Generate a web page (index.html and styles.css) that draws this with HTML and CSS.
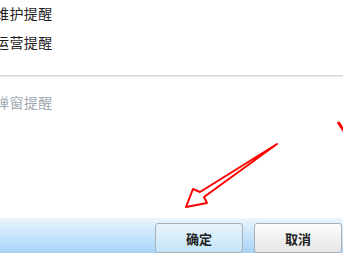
FILE: index.html
```html
<!DOCTYPE html>
<html lang="zh-cn">
<head>
    <meta charset="UTF-8">
    <title>提醒设置</title>
    <link rel="stylesheet" href="styles.css">
</head>
<body>

    <div class="opts">
        <div class="opt">维护提醒</div>
        <div class="opt">运营提醒</div>
        <div class="divider"></div>
        <div class="opt disabled">弹窗提醒</div>
    </div>

    <!-- 底部按钮栏 -->
    <div class="footer">
        <button class="btn btn-ok">确定</button>
        <button class="btn">取消</button>
    </div>

    <!-- 标注箭头 -->
    <svg class="marks" width="343" height="253" viewBox="0 0 343 253">
        <polygon points="277,144 200,192 193,189 186,207 207,203 204,197"
                 fill="none" stroke="#ff0000" stroke-width="2" stroke-linejoin="round"/>
        <line x1="338" y1="122" x2="344" y2="131" stroke="#ff0000" stroke-width="3"/>
    </svg>

</body>
</html>
```

FILE: styles.css
```css
/* 全局 */
body {
    margin: 0;
    height: 253px;
    overflow: hidden;
    position: relative;
    display: flex;
    flex-direction: column;
    background-color: #fff;
    font-family: "Noto Sans CJK SC", sans-serif;
    font-size: 14px;
    color: #1e1e1e;
}

/* 选项列表 */
.opts {
    margin-left: -5px;
}

.opt {
    height: 29px;
    line-height: 26px;
    letter-spacing: 0.4px;
}

.opt.disabled {
    margin-top: 12px;
    color: #9ea8b2;
}

.divider {
    margin: 17px 0 0 5px;
    border-top: 1px solid #d4d4d4;
    border-bottom: 1px solid #ececec;
}

/* 底部栏 */
.footer {
    margin-top: auto;
    height: 35px;
    box-sizing: border-box;
    padding: 5px 1px 0 0;
    display: flex;
    justify-content: flex-end;
    gap: 11px;
    background: linear-gradient(#eaf5fd, #a6d3f8);
}

.btn {
    width: 88px;
    height: 30px;
    border: 1px solid #a9b0b8;
    border-radius: 3px;
    background: linear-gradient(#fdfdfd, #e6e6e6);
    font-family: "Noto Sans CJK SC", sans-serif;
    font-size: 13px;
    font-weight: bold;
    color: #222;
    padding: 0;
}

.btn-ok {
    background: linear-gradient(#e8f4fc, #c4e4f7);
}

/* 标注 */
.marks {
    position: absolute;
    left: 0;
    top: 0;
    pointer-events: none;
}
```
